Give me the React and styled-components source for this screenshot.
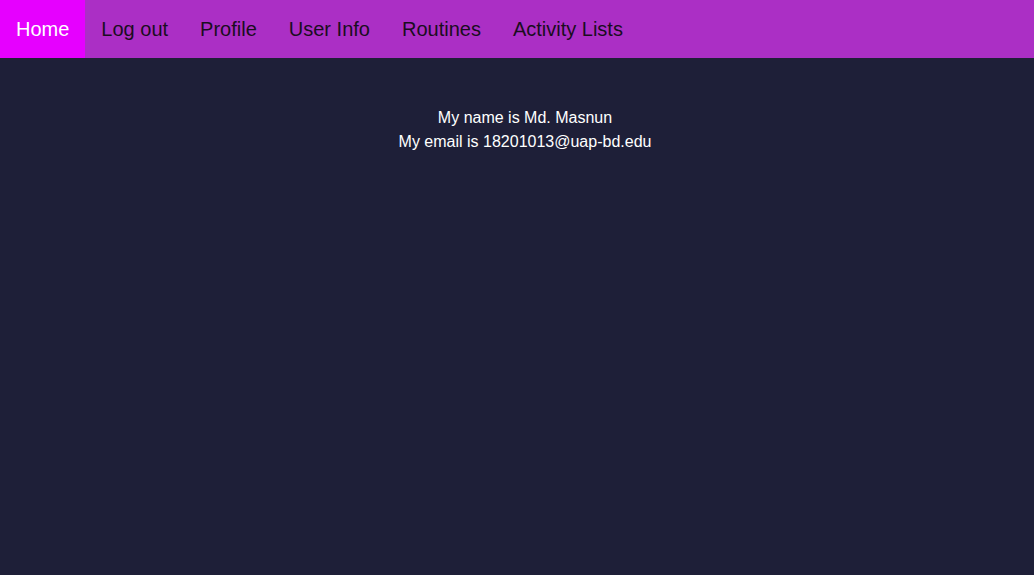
import styled, { createGlobalStyle } from 'styled-components'

const GlobalStyle = createGlobalStyle`
    html, body {
        margin: 0;
        padding: 0;
        background-color: #1e1f38;
        font-family: "Liberation Sans", Arial, sans-serif;
    }
    #root {
        min-height: 100vh;
    }
`

const NavBar = styled.nav`
    display: flex;
    align-items: stretch;
    height: 58px;
    background-color: #ab2fc5;
`

const NavItem = styled.a`
    display: flex;
    align-items: center;
    padding: 0 16px;
    font-size: 20px;
    text-decoration: none;
    color: ${({ $active }) => ($active ? '#ffffff' : '#1a0d1e')};
    background-color: ${({ $active }) => ($active ? '#e600ff' : 'transparent')};
`

const Content = styled.main`
    padding: 48px 0 0 16px;
    text-align: center;
    color: #ffffff;
    font-size: 16px;
    line-height: 24px;
`

const links = ['Home', 'Log out', 'Profile', 'User Info', 'Routines', 'Activity Lists']

const App = () => {
    return <>
        <GlobalStyle />
        <NavBar>
            {links.map((name, i) => (
                <NavItem key={name} href="#" $active={i === 0}>{name}</NavItem>
            ))}
        </NavBar>
        <Content>
            <div>My name is Md. Masnun</div>
            <div>My email is 18201013@uap-bd.edu</div>
        </Content>
    </>
}

export default App
